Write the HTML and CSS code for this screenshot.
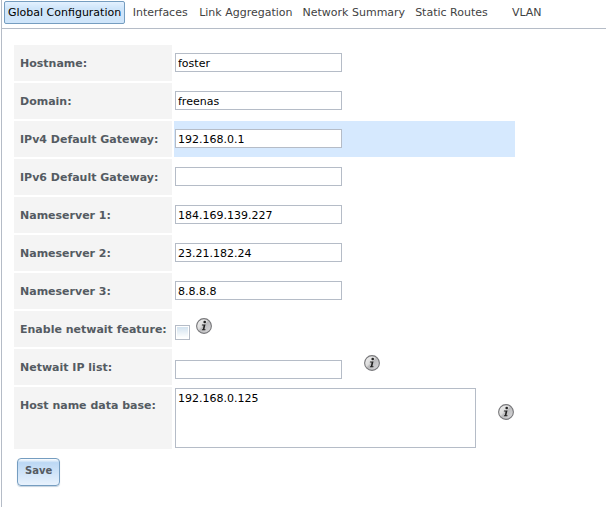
FILE: index.html
```html
<!DOCTYPE html>
<html lang="en">
<head>
<meta charset="utf-8">
<title>Network - Global Configuration</title>
<link rel="stylesheet" href="styles.css">
</head>
<body>
<svg class="defs" aria-hidden="true">
  <defs>
    <linearGradient id="metal" x1="0" y1="0" x2="1" y2="1">
      <stop offset="0" stop-color="#f4f4f4"/>
      <stop offset="0.42" stop-color="#dcdcdc"/>
      <stop offset="0.5" stop-color="#bcbcbe"/>
      <stop offset="1" stop-color="#dedee0"/>
    </linearGradient>
    <symbol id="info" viewBox="0 0 16 16">
      <circle cx="8" cy="8" r="7.4" fill="url(#metal)" stroke="#77777a" stroke-width="1.1"/>
      <circle cx="8.7" cy="4" r="1.3" fill="#222"/>
      <path d="M6 6.4h3.5L8.4 11.3h1.2l-.3 1H5.8l.3-1h.7l.8-3.9H5.8z" fill="#222"/>
    </symbol>
  </defs>
</svg>
<main class="panel">
  <nav class="tabs">
    <a class="tab tab-active" href="#global" aria-current="page">Global Configuration</a>
    <a class="tab" href="#interfaces">Interfaces</a>
    <a class="tab" href="#lagg">Link Aggregation</a>
    <a class="tab" href="#summary">Network Summary</a>
    <a class="tab" href="#routes">Static Routes</a>
    <a class="tab" href="#vlan">VLAN</a>
  </nav>
  <form class="form">
    <div class="row"><label class="name" for="hostname">Hostname:</label><div class="value"><input class="text" id="hostname" type="text" value="foster"></div></div>
    <div class="row"><label class="name" for="domain">Domain:</label><div class="value"><input class="text" id="domain" type="text" value="freenas"></div></div>
    <div class="row"><label class="name" for="gw4">IPv4 Default Gateway:</label><div class="value value-hover"><input class="text" id="gw4" type="text" value="192.168.0.1"></div></div>
    <div class="row"><label class="name" for="gw6">IPv6 Default Gateway:</label><div class="value"><input class="text" id="gw6" type="text"></div></div>
    <div class="row"><label class="name" for="ns1">Nameserver 1:</label><div class="value"><input class="text" id="ns1" type="text" value="184.169.139.227"></div></div>
    <div class="row"><label class="name" for="ns2">Nameserver 2:</label><div class="value"><input class="text" id="ns2" type="text" value="23.21.182.24"></div></div>
    <div class="row"><label class="name" for="ns3">Nameserver 3:</label><div class="value"><input class="text" id="ns3" type="text" value="8.8.8.8"></div></div>
    <div class="row"><label class="name" for="netwait">Enable netwait feature:</label><div class="value value-help help-near"><input class="check" id="netwait" type="checkbox"><svg class="info"><use href="#info"/></svg></div></div>
    <div class="row"><label class="name" for="iplist">Netwait IP list:</label><div class="value value-help"><input class="text" id="iplist" type="text"><svg class="info"><use href="#info"/></svg></div></div>
    <div class="row row-area"><label class="name" for="hosts">Host name data base:</label><div class="value value-area"><textarea class="area" id="hosts">192.168.0.125</textarea><svg class="info"><use href="#info"/></svg></div></div>
    <button class="save" type="button">Save</button>
  </form>
</main>
</body>
</html>
```
FILE: styles.css
```css
* {
  box-sizing: border-box;
}

body {
  margin: 0;
  background: #fff;
  font: 11px/14px Verdana, "DejaVu Sans", sans-serif;
}

.defs {
  position: absolute;
  width: 0;
  height: 0;
}

.panel {
  min-height: 100vh;
  margin-left: 1px;
  border-left: 1px solid #b5bcc7;
}

.tabs {
  display: flex;
  gap: 2px;
  padding: 1px 2px 4px;
  border-bottom: 1px solid #b5bcc7;
}

.tab {
  min-width: 66px;
  padding: 4px 3px 3px;
  border: 1px solid transparent;
  border-radius: 2px;
  color: #424242;
  line-height: 14px;
  text-align: center;
  text-decoration: none;
  white-space: nowrap;
}

.tab-active {
  border-color: #759dc0;
  background: linear-gradient(#e4f1ff, #cfe5fa 30%, #cfe5fa);
  color: #000;
}

.form {
  display: grid;
  gap: 2px;
  max-width: 513px;
  padding: 16px 0 0 12px;
}

.row {
  display: grid;
  grid-template-columns: 158px 1fr;
  gap: 2px;
  min-height: 36px;
}

.row-area {
  min-height: 62px;
}

.name {
  padding: 12px 0 10px 6px;
  background: #f4f4f4;
  color: #545b62;
  font-weight: bold;
  white-space: nowrap;
}

.value {
  display: flex;
  align-items: flex-start;
  padding: 8px 1px;
}

.value-hover {
  background: #d6e9fe;
}

.value-help {
  align-items: flex-end;
  gap: 22px;
  padding: 6px 1px;
}

.help-near {
  gap: 6px;
  padding: 7px 1px;
}

.value-area {
  gap: 22px;
  padding: 1px;
}

.text,
.area {
  border: 1px solid #b5bcc7;
  border-radius: 0;
  background: #fff;
  color: #000;
  font: inherit;
}

.text {
  width: 167px;
  height: 19px;
  padding: 2px 2px 0;
}

.area {
  width: 301px;
  height: 60px;
  padding: 3px 2px 2px;
  resize: none;
}

.check {
  appearance: none;
  width: 15px;
  height: 15px;
  margin: 0;
  border: 1px solid #b5bcc7;
  background: linear-gradient(#d3e3ef, #fff) content-box, #fff;
  padding: 1px;
}

.info {
  flex: none;
  width: 16px;
  height: 16px;
}

.value-help .info {
  align-self: flex-start;
}

.value-area .info {
  margin-top: 16px;
}

.save {
  justify-self: start;
  margin: 7px 3px;
  padding: 4px 7px 6px;
  border: 1px solid #759dc0;
  border-radius: 4px;
  background: linear-gradient(#fff, #bcd8f4 14%, #e8f2fd);
  box-shadow: 0 1px 1px #c5d3e0;
  color: #555b62;
  font: bold 10px/16px Verdana, "DejaVu Sans", sans-serif;
}
```
